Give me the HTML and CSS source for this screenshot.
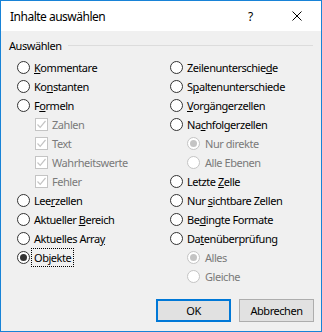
FILE: index.html
```html
<!DOCTYPE html>
<html lang="de">
<head>
  <meta charset="UTF-8" />
  <title>Inhalte auswählen</title>
  <link rel="stylesheet" href="styles.css">
</head>
<body>
  <div class="dialog">
    <div class="titlebar">
      <span class="title">Inhalte auswählen</span>
      <span class="help">?</span>
      <svg class="close" width="10" height="10" viewBox="0 0 10 10">
        <path d="M0.5 0.5 L9.5 9.5 M9.5 0.5 L0.5 9.5" stroke="#000" stroke-width="1" />
      </svg>
    </div>

    <div class="content">
      <div class="group-head">
        <span>Auswählen</span>
        <span class="line"></span>
      </div>

      <div class="columns">
        <div class="col">
          <div class="opt"><span class="radio"></span><span><u>K</u>ommentare</span></div>
          <div class="opt"><span class="radio"></span><span>Ko<u>n</u>stanten</span></div>
          <div class="opt"><span class="radio"></span><span>F<u>o</u>rmeln</span></div>
          <div class="opt sub disabled"><span class="check"><svg width="11" height="11" viewBox="0 0 11 11"><path d="M1.5 5.5 L4.2 8.3 L9.5 2" fill="none" stroke="#c4c4c4" stroke-width="1.2"/></svg></span><span>Zahlen</span></div>
          <div class="opt sub disabled"><span class="check"><svg width="11" height="11" viewBox="0 0 11 11"><path d="M1.5 5.5 L4.2 8.3 L9.5 2" fill="none" stroke="#c4c4c4" stroke-width="1.2"/></svg></span><span>Text</span></div>
          <div class="opt sub disabled"><span class="check"><svg width="11" height="11" viewBox="0 0 11 11"><path d="M1.5 5.5 L4.2 8.3 L9.5 2" fill="none" stroke="#c4c4c4" stroke-width="1.2"/></svg></span><span>Wahrheitswerte</span></div>
          <div class="opt sub disabled"><span class="check"><svg width="11" height="11" viewBox="0 0 11 11"><path d="M1.5 5.5 L4.2 8.3 L9.5 2" fill="none" stroke="#c4c4c4" stroke-width="1.2"/></svg></span><span>Fehler</span></div>
          <div class="opt"><span class="radio"></span><span>Lee<u>r</u>zellen</span></div>
          <div class="opt"><span class="radio"></span><span>Aktueller <u>B</u>ereich</span></div>
          <div class="opt"><span class="radio"></span><span>Aktuelles Arra<u>y</u></span></div>
          <div class="opt"><span class="radio checked"></span><span class="focus">Ob<u>j</u>ekte</span></div>
        </div>

        <div class="col">
          <div class="opt"><span class="radio"></span><span>Zeilenunterschie<u>d</u>e</span></div>
          <div class="opt"><span class="radio"></span><span>S<u>p</u>altenunterschiede</span></div>
          <div class="opt"><span class="radio"></span><span><u>V</u>orgängerzellen</span></div>
          <div class="opt"><span class="radio"></span><span>Na<u>c</u>hfolgerzellen</span></div>
          <div class="opt sub disabled"><span class="radio checked"></span><span>Nur direkte</span></div>
          <div class="opt sub disabled"><span class="radio"></span><span>Alle Ebenen</span></div>
          <div class="opt"><span class="radio"></span><span>Letzte <u>Z</u>elle</span></div>
          <div class="opt"><span class="radio"></span><span>Nur <u>s</u>ichtbare Zellen</span></div>
          <div class="opt"><span class="radio"></span><span>Be<u>d</u>ingte Formate</span></div>
          <div class="opt"><span class="radio"></span><span>Da<u>t</u>enüberprüfung</span></div>
          <div class="opt sub disabled"><span class="radio checked"></span><span>Alles</span></div>
          <div class="opt sub disabled"><span class="radio"></span><span>Gleiche</span></div>
        </div>
      </div>

      <div class="buttons">
        <button class="btn default">OK</button>
        <button class="btn">Abbrechen</button>
      </div>
    </div>
  </div>
</body>
</html>
```

FILE: styles.css
```css
* {
  box-sizing: border-box;
  margin: 0;
  padding: 0;
}

body {
  font-family: 'Segoe UI', 'Noto Sans', sans-serif;
  font-size: 11px;
  letter-spacing: -0.45px;
  color: #000;
  background: #fff;
}

.dialog {
  width: 322px;
  height: 332px;
  border: 1px solid #1883d7;
  background: #f0f0f0;
  display: flex;
  flex-direction: column;
}

.titlebar {
  height: 30px;
  background: #fff;
  display: flex;
  align-items: center;
  padding-left: 9px;
  font-size: 12px;
  letter-spacing: -0.5px;
}

.title {
  flex: 1;
}

.help {
  width: 10px;
  margin-right: 34px;
  font-size: 12px;
}

.close {
  margin-right: 19px;
}

.content {
  flex: 1;
  padding: 7px 7px 0 8px;
  display: flex;
  flex-direction: column;
}

.group-head {
  height: 14px;
  display: flex;
  align-items: center;
  gap: 6px;
  padding-right: 1px;
}

.group-head .line {
  flex: 1;
  border-top: 1px solid #dcdcdc;
}

.columns {
  margin-top: 6px;
  margin-left: 8px;
  display: grid;
  grid-template-columns: 153px 1fr;
}

.opt {
  height: 19px;
  display: flex;
  align-items: center;
  gap: 4px;
  white-space: nowrap;
}

.opt.sub {
  padding-left: 18px;
}

.col:last-child .opt.sub {
  padding-left: 17px;
  gap: 5px;
}

.disabled {
  color: #7a7a7a;
}

.radio {
  width: 13px;
  height: 13px;
  border: 1px solid #333;
  border-radius: 50%;
  background: #fff;
  display: flex;
  align-items: center;
  justify-content: center;
  flex-shrink: 0;
}

.radio.checked::after {
  content: "";
  width: 7px;
  height: 7px;
  border-radius: 50%;
  background: #333;
}

.disabled .radio {
  border-color: #c4c4c4;
}

.disabled .radio.checked::after {
  background: #c4c4c4;
}

.check {
  width: 13px;
  height: 13px;
  border: 1px solid #c4c4c4;
  background: #fff;
  display: flex;
  flex-shrink: 0;
}

.focus {
  outline: 1px dotted #000;
  outline-offset: 1px;
  margin-left: -1px;
  padding: 0 1px;
}

.buttons {
  margin-top: 13px;
  display: flex;
  justify-content: flex-end;
  gap: 8px;
}

.btn {
  width: 75px;
  height: 23px;
  font-family: inherit;
  font-size: 11px;
  letter-spacing: -0.45px;
  background: #e1e1e1;
  border: 1px solid #adadad;
  color: #000;
}

.btn.default {
  border: 2px solid #0078d7;
}
```
